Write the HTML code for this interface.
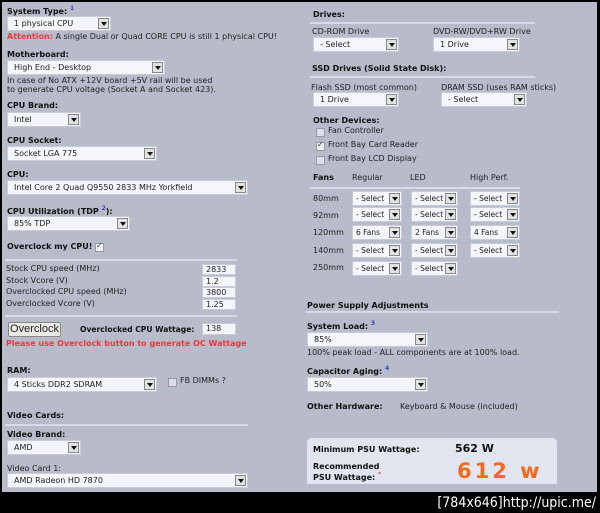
<!DOCTYPE html>
<html><head><meta charset="utf-8"><style>
*{margin:0;padding:0;box-sizing:border-box}
body{width:600px;height:513px;background:#000;position:relative;overflow:hidden;font-family:"DejaVu Sans","Liberation Sans",sans-serif;font-size:8px;color:#222}
#p{position:absolute;left:2px;top:2px;width:595px;height:490px;background:#b7bbca}
.a{position:absolute;white-space:nowrap;line-height:10px}
b,.b{font-weight:bold;color:#111}
sup{color:#3344cc;font-size:6px;vertical-align:baseline;position:relative;top:-4px;line-height:0}
.s{position:absolute;background:#f4f6fb;border:1px solid #c8ccd8;height:15px;font-size:8px;line-height:13px;padding-left:6px;color:#222;overflow:hidden}
.s i{position:absolute;right:1px;top:1px;width:11px;height:11px;background:#e2e2e2;border:1px solid #888}
.s i:after{content:"";position:absolute;left:2px;top:3px;border-left:3px solid transparent;border-right:3px solid transparent;border-top:4px solid #111}
.f{padding-left:3px;font-size:7.5px}
.l{position:absolute;height:2px;background:#d8dbe5}
.in{position:absolute;background:#f4f6fb;border:1px solid #c8ccd8;width:34px;height:11px;font-size:8px;line-height:9px;padding-left:3px}
.cb{position:absolute;width:9px;height:9px;background:#dde;border:1px solid #999}
.red{color:#e83a3a;font-weight:bold}
</style></head><body>
<div id="p"></div>
<div class="a b" style="left:7px;top:7px">System Type: <sup>1</sup></div>
<div class="s" style="left:7px;top:16px;width:104px">1 physical CPU<i></i></div>
<div class="a" style="left:7px;top:32px"><span class="red">Attention:</span> A single Dual or Quad CORE CPU is still 1 physical CPU!</div>
<div class="a b" style="left:7px;top:50px">Motherboard:</div>
<div class="s" style="left:7px;top:60px;width:158px">High End - Desktop<i></i></div>
<div class="a" style="left:7px;top:76px">In case of No ATX +12V board +5V rail will be used</div>
<div class="a" style="left:7px;top:85px">to generate CPU voltage (Socket A and Socket 423).</div>
<div class="a b" style="left:7px;top:101px">CPU Brand:</div>
<div class="s" style="left:7px;top:112px;width:74px">Intel<i></i></div>
<div class="a b" style="left:7px;top:136px">CPU Socket:</div>
<div class="s" style="left:7px;top:146px;width:150px">Socket LGA 775<i></i></div>
<div class="a b" style="left:7px;top:170px">CPU:</div>
<div class="s" style="left:7px;top:180px;width:241px">Intel Core 2 Quad Q9550 2833 MHz Yorkfield<i></i></div>
<div class="a b" style="left:7px;top:207px">CPU Utilization (TDP <sup>2</sup>):</div>
<div class="s" style="left:7px;top:216px;width:123px">85% TDP<i></i></div>
<div class="a b" style="left:7px;top:242px">Overclock my CPU!</div>
<div class="cb" style="left:95px;top:243px;background:#eee">
<span style="position:absolute;left:0;top:-3px;font-size:8px;color:#336">✓</span></div>
<div class="l" style="left:5px;top:259px;width:232px"></div>
<div class="a" style="left:6px;top:264px">Stock CPU speed (MHz)</div>
<div class="a" style="left:6px;top:276px">Stock Vcore (V)</div>
<div class="a" style="left:6px;top:287px">Overclocked CPU speed (MHz)</div>
<div class="a" style="left:6px;top:299px">Overclocked Vcore (V)</div>
<div class="in" style="left:202px;top:264px">2833</div>
<div class="in" style="left:202px;top:276px">1.2</div>
<div class="in" style="left:202px;top:287px">3800</div>
<div class="in" style="left:202px;top:299px">1.25</div>
<div class="l" style="left:5px;top:315px;width:232px"></div>
<div class="a" style="left:8px;top:322px;width:53px;height:15px;background:#eceae6;border:1px solid #888;border-radius:2px;font-family:'Liberation Sans',sans-serif;font-size:11px;line-height:13px;text-align:center">Overclock</div>
<div class="a b" style="left:80px;top:325px;font-size:7.6px">Overclocked CPU Wattage:</div>
<div class="in" style="left:202px;top:323px;height:12px">138</div>
<div class="a red" style="left:6px;top:339px">Please use Overclock button to generate OC Wattage</div>
<div class="a b" style="left:7px;top:366px">RAM:</div>
<div class="s" style="left:7px;top:377px;width:150px">4 Sticks DDR2 SDRAM<i></i></div>
<div class="cb" style="left:168px;top:378px"></div>
<div class="a" style="left:180px;top:376px">FB DIMMs ?</div>
<div class="a b" style="left:7px;top:411px">Video Cards:</div>
<div class="l" style="left:5px;top:424px;width:243px"></div>
<div class="a b" style="left:7px;top:430px">Video Brand:</div>
<div class="s" style="left:7px;top:440px;width:74px">AMD<i></i></div>
<div class="a" style="left:7px;top:464px">Video Card 1:</div>
<div class="s" style="left:7px;top:473px;width:241px">AMD Radeon HD 7870<i></i></div>

<div class="a b" style="left:313px;top:10px">Drives:</div>
<div class="l" style="left:310px;top:22px;width:225px"></div>
<div class="a" style="left:312px;top:27px">CD-ROM Drive</div>
<div class="a" style="left:433px;top:27px">DVD-RW/DVD+RW Drive</div>
<div class="s" style="left:313px;top:37px;width:86px">- Select<i></i></div>
<div class="s" style="left:433px;top:37px;width:87px">1 Drive<i></i></div>
<div class="a b" style="left:312px;top:64px">SSD Drives (Solid State Disk):</div>
<div class="l" style="left:310px;top:76px;width:225px"></div>
<div class="a" style="left:311px;top:83px">Flash SSD (most common)</div>
<div class="a" style="left:441px;top:83px">DRAM SSD (uses RAM sticks)</div>
<div class="s" style="left:313px;top:92px;width:86px">1 Drive<i></i></div>
<div class="s" style="left:441px;top:92px;width:86px">- Select<i></i></div>
<div class="a b" style="left:313px;top:116px">Other Devices:</div>
<div class="cb" style="left:316px;top:128px"></div><div class="a" style="left:328px;top:126px">Fan Controller</div>
<div class="cb" style="left:316px;top:142px;background:#eee"><span style="position:absolute;left:0;top:-3px;font-size:8px;color:#336">✓</span></div><div class="a" style="left:328px;top:140px">Front Bay Card Reader</div>
<div class="cb" style="left:316px;top:156px"></div><div class="a" style="left:328px;top:154px">Front Bay LCD Display</div>
<div class="a b" style="left:313px;top:173px">Fans</div>
<div class="a" style="left:352px;top:173px">Regular</div>
<div class="a" style="left:410px;top:173px">LED</div>
<div class="a" style="left:470px;top:173px">High Perf.</div>
<div class="l" style="left:310px;top:187px;width:210px"></div>
<div class="a" style="left:313px;top:194px">80mm</div>
<div class="a" style="left:313px;top:211px">92mm</div>
<div class="a" style="left:313px;top:228px">120mm</div>
<div class="a" style="left:313px;top:246px">140mm</div>
<div class="a" style="left:313px;top:263px">250mm</div>
<div class="s f" style="left:352px;top:191px;width:50px">- Select<i></i></div>
<div class="s f" style="left:411px;top:191px;width:47px">- Select<i></i></div>
<div class="s f" style="left:470px;top:191px;width:50px">- Select<i></i></div>
<div class="s f" style="left:352px;top:207px;width:50px">- Select<i></i></div>
<div class="s f" style="left:411px;top:207px;width:47px">- Select<i></i></div>
<div class="s f" style="left:470px;top:207px;width:50px">- Select<i></i></div>
<div class="s f" style="left:352px;top:225px;width:50px">6 Fans<i></i></div>
<div class="s f" style="left:411px;top:225px;width:47px">2 Fans<i></i></div>
<div class="s f" style="left:470px;top:225px;width:50px">4 Fans<i></i></div>
<div class="s f" style="left:352px;top:243px;width:50px">- Select<i></i></div>
<div class="s f" style="left:411px;top:243px;width:47px">- Select<i></i></div>
<div class="s f" style="left:470px;top:243px;width:50px">- Select<i></i></div>
<div class="s f" style="left:352px;top:261px;width:50px">- Select<i></i></div>
<div class="s f" style="left:411px;top:261px;width:47px">- Select<i></i></div>

<div class="a b" style="left:307px;top:301px">Power Supply Adjustments</div>
<div class="l" style="left:306px;top:311px;width:253px"></div>
<div class="a b" style="left:307px;top:322px">System Load: <sup>3</sup></div>
<div class="s" style="left:307px;top:332px;width:121px">85%<i></i></div>
<div class="a" style="left:307px;top:348px">100% peak load - ALL components are at 100% load.</div>
<div class="a b" style="left:307px;top:367px">Capacitor Aging: <sup>4</sup></div>
<div class="s" style="left:307px;top:377px;width:121px">50%<i></i></div>
<div class="a b" style="left:307px;top:402px">Other Hardware:</div>
<div class="a" style="left:400px;top:402px">Keyboard &amp; Mouse (included)</div>
<div style="position:absolute;left:307px;top:438px;width:250px;height:46px;background:#e1e5f0;border-radius:4px 4px 0 0"></div>
<div class="a b" style="left:313px;top:445px">Minimum PSU Wattage:</div>
<div class="a b" style="left:455px;top:443px;font-size:11px;line-height:12px">562 W</div>
<div class="a b" style="left:313px;top:462px">Recommended</div>
<div class="a b" style="left:313px;top:473px">PSU Wattage: <sup style="color:#e44">*</sup></div>
<div class="a" style="left:457px;top:460px;font-size:21px;line-height:22px;font-weight:bold;color:#f26a1b;letter-spacing:3px;font-family:'DejaVu Sans',sans-serif">612 w</div>
<div class="a" style="right:4px;top:495px;color:#fff;font-size:14px;line-height:16px;font-family:'DejaVu Sans Condensed','DejaVu Sans',sans-serif">[784x646]http://upic.me/</div>
</body></html>
